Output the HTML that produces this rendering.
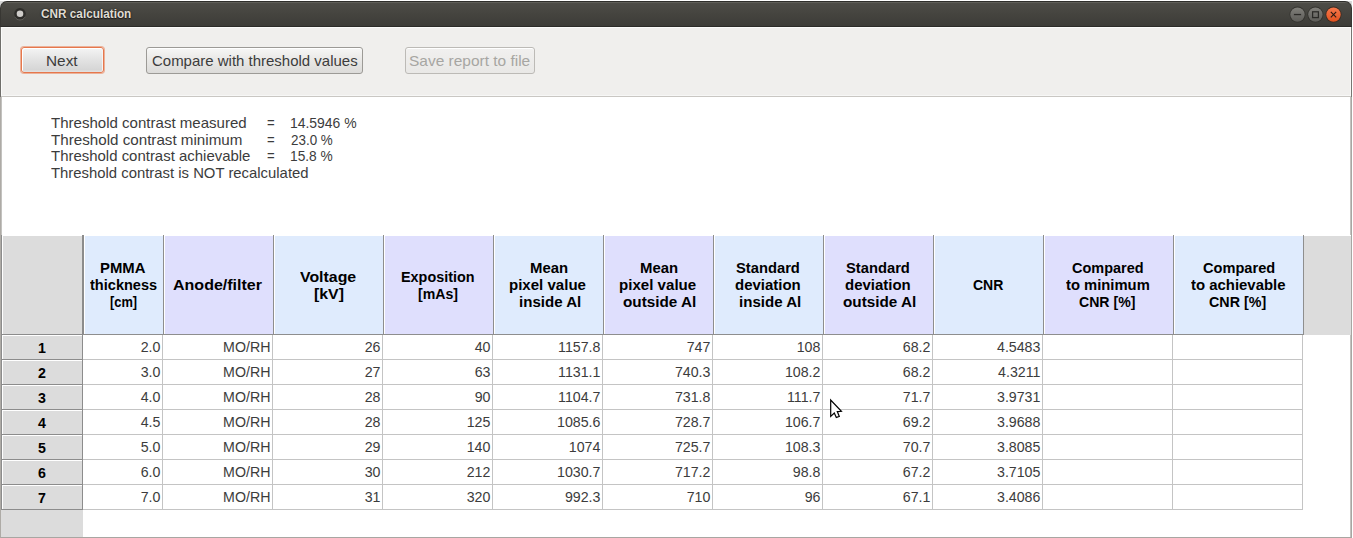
<!DOCTYPE html><html><head><meta charset="utf-8"><style>
html,body{margin:0;padding:0;}
body{width:1353px;height:538px;overflow:hidden;position:relative;background:#fff;font-family:"Liberation Sans",sans-serif;}
div{box-sizing:border-box;}
#cornerL{position:absolute;left:0;top:1px;width:9px;height:9px;background:#d8d8d8;}
#cornerR{position:absolute;left:1343px;top:1px;width:9px;height:9px;background:#d8d8d8;}
#tb{position:absolute;left:0;top:1px;width:1352px;height:26px;border-radius:7px 7px 0 0;border-left:1px solid #383733;border-right:1px solid #383733;
 background:linear-gradient(#605f59 0px,#605f59 1px,#4d4c47 1px,#45443f 12px,#3d3c38 24px);
 border-top:1px solid #2f2e2b;border-bottom:1px solid #2c2b28;z-index:1}
#tool{position:absolute;left:0;top:27px;width:1352px;height:70px;background:#f0efed;
 border-left:1px solid #6f6e6a;border-right:1px solid #777672;box-shadow:inset -1px 0 0 #f7f7f6;}
#tool::before{content:"";position:absolute;left:0;top:0;right:0;height:1px;background:#fbfbfa;}
#tool::after{content:"";position:absolute;left:0;top:0;bottom:0;width:1px;background:#fbfbfa;}
#sep{position:absolute;left:1px;top:95px;width:1350px;height:2px;border-top:1px solid #f7f7f6;background:#c9c7c3;}
#txt{position:absolute;left:0;top:97px;width:1352px;height:441px;background:#fff;border-left:1px solid #aeaba6;border-right:1px solid #a8a6a2;border-bottom:1px solid #a8a6a2;}
#txt::before{content:"";position:absolute;left:0;top:0;bottom:0;width:1px;background:#c3c2bf;}
#txt::after{content:"";position:absolute;right:0;top:0;bottom:0;width:1px;background:#c3c2bf;}
.btn{position:absolute;top:47px;height:27px;border:1px solid #9c9a96;border-radius:3px;
 background:linear-gradient(#f7f7f6,#ebeae8 40%,#dcdbd9);box-shadow:inset 0 1px 0 #fff;}
#btnNext{left:21px;top:47px;width:83px;height:26px;border:1px solid #e6774c;border-radius:3px;box-shadow:0 0 0 1px rgba(232,125,84,0.55), inset 1px 1px 0 #fff, inset -1px 0 0 #f4f4f4;
 background:linear-gradient(#f4f4f4,#e4e4e4 45%,#d6d6d6 90%,#e2e2e2);}
#btnCmp{left:146px;width:217px;}
#btnSave{left:405px;width:130px;border-color:#bcbab6;background:linear-gradient(#f1f0ef,#e9e8e6);}
#tframeL{position:absolute;left:1px;top:235px;width:1px;height:275px;background:#8c8c8c;}
#corner{position:absolute;left:2px;top:235px;width:82px;height:100px;background:#dcdcdc;border-right:2px solid #8c8c8c;border-bottom:1px solid #8c8c8c;box-shadow:inset 1px 1px 0 #fff;}
.hs{position:absolute;top:235px;height:100px;border-right:1px solid #8e8e8e;border-bottom:1px solid #8e8e8e;box-shadow:inset 1px 1px 0 #fff;}
.hb{background:#dfebfd;}
.hp{background:#dfdffd;}
#hfill{position:absolute;left:1304px;top:235px;width:47px;height:100px;background:#dcdcdc;box-shadow:inset 0 1px 0 #fff;}
.rh{position:absolute;left:2px;width:81px;height:25px;background:#dcdcdc;border-right:1px solid #8c8c8c;border-bottom:1px solid #8c8c8c;box-shadow:inset 1px 1px 0 #fff;}
#rhfill{position:absolute;left:1px;top:510px;width:82px;height:27px;background:#dcdcdc;}
.vl{position:absolute;top:335px;width:1px;height:175px;background:#c4c4c4;}
.hl{position:absolute;left:83px;width:1220px;height:1px;background:#c4c4c4;}
svg{z-index:2}
#title{text-shadow:0 0 2px #1e1d1b, 0 1px 1px #1e1d1b;z-index:2}
.t{z-index:3}
</style></head><body>
<div id="tb"></div>
<div id="cornerL"></div><div id="cornerR"></div>
<svg id="ctl" width="70" height="26" viewBox="0 0 70 26" style="position:absolute;left:1283px;top:1px">
<defs>
<linearGradient id="gg" x1="0" y1="0" x2="0" y2="1"><stop offset="0" stop-color="#807f7a"/><stop offset="1" stop-color="#5d5c58"/></linearGradient>
<linearGradient id="og" x1="0" y1="0" x2="0" y2="1"><stop offset="0" stop-color="#f6784c"/><stop offset="1" stop-color="#e2521f"/></linearGradient>
</defs>
<circle cx="14.5" cy="13.6" r="8" fill="#33322e"/>
<circle cx="14.5" cy="13.6" r="7.2" fill="url(#gg)"/>
<rect x="10.9" y="12.9" width="7.2" height="1.3" fill="#2b2a27"/>
<circle cx="32.4" cy="13.6" r="8" fill="#33322e"/>
<circle cx="32.4" cy="13.6" r="7.2" fill="url(#gg)"/>
<rect x="29.6" y="10.8" width="5.8" height="5.8" fill="none" stroke="#2b2a27" stroke-width="1.25"/>
<circle cx="50.5" cy="13.6" r="8" fill="#3a2a22"/>
<circle cx="50.5" cy="13.6" r="7.2" fill="url(#og)"/>
<path d="M47.8 10.9 L53.2 16.3 M53.2 10.9 L47.8 16.3" stroke="#2a1a14" stroke-width="1.1"/>
</svg>
<svg width="16" height="18" style="position:absolute;left:12px;top:5px" viewBox="0 0 16 18">
<path d="M2.9 11.9 A5.9 5.9 0 0 0 13.1 11.9" fill="none" stroke="#75746f" stroke-width="1"/>
<circle cx="8" cy="8.8" r="5.8" fill="#2e2d2a"/>
<circle cx="8" cy="8.8" r="3.3" fill="#cfcdca"/>
</svg>
<div id="tool"></div>
<div id="btnNext" class="btn"></div><div id="btnCmp" class="btn"></div><div id="btnSave" class="btn dis"></div>
<div id="sep"></div>
<div id="txt"></div>
<div id="corner"></div><div id="tframeL"></div>
<div class="hs hb" style="left:84px;width:80px"></div>
<div class="hs hp" style="left:164px;width:110px"></div>
<div class="hs hb" style="left:274px;width:110px"></div>
<div class="hs hp" style="left:384px;width:110px"></div>
<div class="hs hb" style="left:494px;width:110px"></div>
<div class="hs hp" style="left:604px;width:110px"></div>
<div class="hs hb" style="left:714px;width:110px"></div>
<div class="hs hp" style="left:824px;width:110px"></div>
<div class="hs hb" style="left:934px;width:110px"></div>
<div class="hs hp" style="left:1044px;width:130px"></div>
<div class="hs hb" style="left:1174px;width:130px"></div>
<div id="hfill"></div>
<div class="rh" style="top:335px"></div>
<div class="rh" style="top:360px"></div>
<div class="rh" style="top:385px"></div>
<div class="rh" style="top:410px"></div>
<div class="rh" style="top:435px"></div>
<div class="rh" style="top:460px"></div>
<div class="rh" style="top:485px"></div>
<div id="rhfill"></div>
<div id="body"></div>
<div class="vl" style="left:162px"></div>
<div class="vl" style="left:272px"></div>
<div class="vl" style="left:382px"></div>
<div class="vl" style="left:492px"></div>
<div class="vl" style="left:602px"></div>
<div class="vl" style="left:712px"></div>
<div class="vl" style="left:822px"></div>
<div class="vl" style="left:932px"></div>
<div class="vl" style="left:1042px"></div>
<div class="vl" style="left:1172px"></div>
<div class="vl" style="left:1302px"></div>
<div class="hl" style="top:359px"></div>
<div class="hl" style="top:384px"></div>
<div class="hl" style="top:409px"></div>
<div class="hl" style="top:434px"></div>
<div class="hl" style="top:459px"></div>
<div class="hl" style="top:484px"></div>
<div class="hl" style="top:509px"></div>
<svg width="16" height="22" viewBox="0 0 16 22" style="position:absolute;left:829px;top:398px">
<path d="M1.7 2 L1.7 18.4 L5.3 15.1 L7.3 19.6 L10.3 18.4 L8.3 13.6 L12.4 13.3 Z" fill="#fff" stroke="#000" stroke-width="1.2" stroke-linejoin="miter"/>
</svg>
<div id="title" class="t" style="position:absolute;white-space:pre;font-size:12.80px;line-height:14.707px;font-weight:700;color:#dfdbd2;top:6.82px;left:40.58px;transform-origin:0 0;transform:scaleX(0.9204);">CNR calculation</div>
<div id="b_next" class="t" style="position:absolute;white-space:pre;font-size:14.20px;line-height:16.316px;font-weight:400;color:#3c3c3c;top:53.15px;left:46.39px;transform-origin:0 0;transform:scaleX(1.0834);">Next</div>
<div id="b_cmp" class="t" style="position:absolute;white-space:pre;font-size:14.20px;line-height:16.316px;font-weight:400;color:#3c3c3c;top:53.15px;left:151.78px;transform-origin:0 0;transform:scaleX(1.0557);">Compare with threshold values</div>
<div id="b_save" class="t" style="position:absolute;white-space:pre;font-size:14.20px;line-height:16.316px;font-weight:400;color:#a7a6a2;top:53.15px;left:408.99px;transform-origin:0 0;transform:scaleX(1.0902);">Save report to file</div>
<div id="info0" class="t" style="position:absolute;white-space:pre;font-size:14.20px;line-height:16.316px;font-weight:400;color:#3c3c3c;top:114.75px;left:50.83px;transform-origin:0 0;transform:scaleX(1.0606);">Threshold contrast measured</div>
<div id="info1" class="t" style="position:absolute;white-space:pre;font-size:14.20px;line-height:16.316px;font-weight:400;color:#3c3c3c;top:131.55px;left:50.84px;transform-origin:0 0;transform:scaleX(1.0693);">Threshold contrast minimum</div>
<div id="info2" class="t" style="position:absolute;white-space:pre;font-size:14.20px;line-height:16.316px;font-weight:400;color:#3c3c3c;top:148.45px;left:50.83px;transform-origin:0 0;transform:scaleX(1.0537);">Threshold contrast achievable</div>
<div id="info3" class="t" style="position:absolute;white-space:pre;font-size:14.20px;line-height:16.316px;font-weight:400;color:#3c3c3c;top:165.35px;left:50.83px;transform-origin:0 0;transform:scaleX(1.0480);">Threshold contrast is NOT recalculated</div>
<div id="eq0" class="t" style="position:absolute;white-space:pre;font-size:14.20px;line-height:16.316px;font-weight:400;color:#3c3c3c;top:114.75px;left:266.58px;transform-origin:0 0;transform:scaleX(0.9264);">=</div>
<div id="val0" class="t" style="position:absolute;white-space:pre;font-size:14.20px;line-height:16.316px;font-weight:400;color:#3c3c3c;top:114.75px;left:290.02px;transform-origin:0 0;transform:scaleX(0.9821);">14.5946 %</div>
<div id="eq1" class="t" style="position:absolute;white-space:pre;font-size:14.20px;line-height:16.316px;font-weight:400;color:#3c3c3c;top:131.55px;left:266.58px;transform-origin:0 0;transform:scaleX(0.9264);">=</div>
<div id="val1" class="t" style="position:absolute;white-space:pre;font-size:14.20px;line-height:16.316px;font-weight:400;color:#3c3c3c;top:131.55px;left:291.00px;transform-origin:0 0;transform:scaleX(0.9455);">23.0 %</div>
<div id="eq2" class="t" style="position:absolute;white-space:pre;font-size:14.20px;line-height:16.316px;font-weight:400;color:#3c3c3c;top:148.45px;left:266.58px;transform-origin:0 0;transform:scaleX(0.9264);">=</div>
<div id="val2" class="t" style="position:absolute;white-space:pre;font-size:14.20px;line-height:16.316px;font-weight:400;color:#3c3c3c;top:148.45px;left:290.03px;transform-origin:0 0;transform:scaleX(0.9675);">15.8 %</div>
<div id="h0_0" class="t" style="position:absolute;white-space:pre;font-size:14.20px;line-height:16.316px;font-weight:700;color:#000000;top:260.05px;left:100.17px;transform-origin:0 0;transform:scaleX(1.0465);">PMMA</div>
<div id="h0_1" class="t" style="position:absolute;white-space:pre;font-size:14.20px;line-height:16.316px;font-weight:700;color:#000000;top:276.75px;left:89.94px;transform-origin:0 0;transform:scaleX(1.0262);">thickness</div>
<div id="h0_2" class="t" style="position:absolute;white-space:pre;font-size:14.20px;line-height:16.316px;font-weight:700;color:#000000;top:294.05px;left:109.87px;transform-origin:0 0;transform:scaleX(0.9066);">[cm]</div>
<div id="h1_0" class="t" style="position:absolute;white-space:pre;font-size:14.20px;line-height:16.316px;font-weight:700;color:#000000;top:276.75px;left:173.44px;transform-origin:0 0;transform:scaleX(1.1291);">Anode/filter</div>
<div id="h2_0" class="t" style="position:absolute;white-space:pre;font-size:14.20px;line-height:16.316px;font-weight:700;color:#000000;top:268.85px;left:299.94px;transform-origin:0 0;transform:scaleX(1.1200);">Voltage</div>
<div id="h2_1" class="t" style="position:absolute;white-space:pre;font-size:14.20px;line-height:16.316px;font-weight:700;color:#000000;top:285.95px;left:313.85px;transform-origin:0 0;transform:scaleX(1.1158);">[kV]</div>
<div id="h3_0" class="t" style="position:absolute;white-space:pre;font-size:14.20px;line-height:16.316px;font-weight:700;color:#000000;top:268.85px;left:401.49px;transform-origin:0 0;transform:scaleX(1.0139);">Exposition</div>
<div id="h3_1" class="t" style="position:absolute;white-space:pre;font-size:14.20px;line-height:16.316px;font-weight:700;color:#000000;top:285.95px;left:418.49px;transform-origin:0 0;transform:scaleX(0.9957);">[mAs]</div>
<div id="h4_0" class="t" style="position:absolute;white-space:pre;font-size:14.20px;line-height:16.316px;font-weight:700;color:#000000;top:260.05px;left:529.78px;transform-origin:0 0;transform:scaleX(1.0500);">Mean</div>
<div id="h4_1" class="t" style="position:absolute;white-space:pre;font-size:14.20px;line-height:16.316px;font-weight:700;color:#000000;top:276.75px;left:508.91px;transform-origin:0 0;transform:scaleX(1.0604);">pixel value</div>
<div id="h4_2" class="t" style="position:absolute;white-space:pre;font-size:14.20px;line-height:16.316px;font-weight:700;color:#000000;top:294.05px;left:519.00px;transform-origin:0 0;transform:scaleX(1.0612);">inside Al</div>
<div id="h5_0" class="t" style="position:absolute;white-space:pre;font-size:14.20px;line-height:16.316px;font-weight:700;color:#000000;top:260.05px;left:639.78px;transform-origin:0 0;transform:scaleX(1.0500);">Mean</div>
<div id="h5_1" class="t" style="position:absolute;white-space:pre;font-size:14.20px;line-height:16.316px;font-weight:700;color:#000000;top:276.75px;left:619.47px;transform-origin:0 0;transform:scaleX(1.0639);">pixel value</div>
<div id="h5_2" class="t" style="position:absolute;white-space:pre;font-size:14.20px;line-height:16.316px;font-weight:700;color:#000000;top:294.05px;left:623.00px;transform-origin:0 0;transform:scaleX(1.0765);">outside Al</div>
<div id="h6_0" class="t" style="position:absolute;white-space:pre;font-size:14.20px;line-height:16.316px;font-weight:700;color:#000000;top:260.05px;left:735.91px;transform-origin:0 0;transform:scaleX(1.0387);">Standard</div>
<div id="h6_1" class="t" style="position:absolute;white-space:pre;font-size:14.20px;line-height:16.316px;font-weight:700;color:#000000;top:276.75px;left:735.16px;transform-origin:0 0;transform:scaleX(1.0549);">deviation</div>
<div id="h6_2" class="t" style="position:absolute;white-space:pre;font-size:14.20px;line-height:16.316px;font-weight:700;color:#000000;top:294.05px;left:739.00px;transform-origin:0 0;transform:scaleX(1.0612);">inside Al</div>
<div id="h7_0" class="t" style="position:absolute;white-space:pre;font-size:14.20px;line-height:16.316px;font-weight:700;color:#000000;top:260.05px;left:845.91px;transform-origin:0 0;transform:scaleX(1.0387);">Standard</div>
<div id="h7_1" class="t" style="position:absolute;white-space:pre;font-size:14.20px;line-height:16.316px;font-weight:700;color:#000000;top:276.75px;left:845.16px;transform-origin:0 0;transform:scaleX(1.0549);">deviation</div>
<div id="h7_2" class="t" style="position:absolute;white-space:pre;font-size:14.20px;line-height:16.316px;font-weight:700;color:#000000;top:294.05px;left:843.00px;transform-origin:0 0;transform:scaleX(1.0765);">outside Al</div>
<div id="h8_0" class="t" style="position:absolute;white-space:pre;font-size:14.20px;line-height:16.316px;font-weight:700;color:#000000;top:276.75px;left:972.89px;transform-origin:0 0;transform:scaleX(0.9872);">CNR</div>
<div id="h9_0" class="t" style="position:absolute;white-space:pre;font-size:14.20px;line-height:16.316px;font-weight:700;color:#000000;top:260.05px;left:1072.49px;transform-origin:0 0;transform:scaleX(1.0200);">Compared</div>
<div id="h9_1" class="t" style="position:absolute;white-space:pre;font-size:14.20px;line-height:16.316px;font-weight:700;color:#000000;top:276.75px;left:1066.21px;transform-origin:0 0;transform:scaleX(1.0420);">to minimum</div>
<div id="h9_2" class="t" style="position:absolute;white-space:pre;font-size:14.20px;line-height:16.316px;font-weight:700;color:#000000;top:294.05px;left:1079.49px;transform-origin:0 0;transform:scaleX(0.9933);">CNR [%]</div>
<div id="h10_0" class="t" style="position:absolute;white-space:pre;font-size:14.20px;line-height:16.316px;font-weight:700;color:#000000;top:260.05px;left:1202.61px;transform-origin:0 0;transform:scaleX(1.0286);">Compared</div>
<div id="h10_1" class="t" style="position:absolute;white-space:pre;font-size:14.20px;line-height:16.316px;font-weight:700;color:#000000;top:276.75px;left:1190.61px;transform-origin:0 0;transform:scaleX(1.0511);">to achievable</div>
<div id="h10_2" class="t" style="position:absolute;white-space:pre;font-size:14.20px;line-height:16.316px;font-weight:700;color:#000000;top:294.05px;left:1209.49px;transform-origin:0 0;transform:scaleX(1.0073);">CNR [%]</div>
<div id="rn0" class="t" style="position:absolute;white-space:pre;font-size:14.20px;line-height:16.316px;font-weight:700;color:#000000;top:339.65px;left:2px;width:80px;text-align:center;">1</div>
<div id="d0_0" class="t" style="position:absolute;white-space:pre;font-size:14.20px;line-height:16.316px;font-weight:400;color:#3c3c3c;top:338.65px;right:1192.60px;transform-origin:100% 0;transform:scaleX(1.0000);">2.0</div>
<div id="d0_1" class="t" style="position:absolute;white-space:pre;font-size:14.20px;line-height:16.316px;font-weight:400;color:#3c3c3c;top:338.65px;right:1082.60px;transform-origin:100% 0;transform:scaleX(1.0000);">MO/RH</div>
<div id="d0_2" class="t" style="position:absolute;white-space:pre;font-size:14.20px;line-height:16.316px;font-weight:400;color:#3c3c3c;top:338.65px;right:972.60px;transform-origin:100% 0;transform:scaleX(1.0000);">26</div>
<div id="d0_3" class="t" style="position:absolute;white-space:pre;font-size:14.20px;line-height:16.316px;font-weight:400;color:#3c3c3c;top:338.65px;right:862.60px;transform-origin:100% 0;transform:scaleX(1.0000);">40</div>
<div id="d0_4" class="t" style="position:absolute;white-space:pre;font-size:14.20px;line-height:16.316px;font-weight:400;color:#3c3c3c;top:338.65px;right:752.60px;transform-origin:100% 0;transform:scaleX(1.0000);">1157.8</div>
<div id="d0_5" class="t" style="position:absolute;white-space:pre;font-size:14.20px;line-height:16.316px;font-weight:400;color:#3c3c3c;top:338.65px;right:642.60px;transform-origin:100% 0;transform:scaleX(1.0000);">747</div>
<div id="d0_6" class="t" style="position:absolute;white-space:pre;font-size:14.20px;line-height:16.316px;font-weight:400;color:#3c3c3c;top:338.65px;right:532.60px;transform-origin:100% 0;transform:scaleX(1.0000);">108</div>
<div id="d0_7" class="t" style="position:absolute;white-space:pre;font-size:14.20px;line-height:16.316px;font-weight:400;color:#3c3c3c;top:338.65px;right:422.60px;transform-origin:100% 0;transform:scaleX(1.0000);">68.2</div>
<div id="d0_8" class="t" style="position:absolute;white-space:pre;font-size:14.20px;line-height:16.316px;font-weight:400;color:#3c3c3c;top:338.65px;right:312.60px;transform-origin:100% 0;transform:scaleX(1.0000);">4.5483</div>
<div id="rn1" class="t" style="position:absolute;white-space:pre;font-size:14.20px;line-height:16.316px;font-weight:700;color:#000000;top:364.65px;left:2px;width:80px;text-align:center;">2</div>
<div id="d1_0" class="t" style="position:absolute;white-space:pre;font-size:14.20px;line-height:16.316px;font-weight:400;color:#3c3c3c;top:363.65px;right:1192.60px;transform-origin:100% 0;transform:scaleX(1.0000);">3.0</div>
<div id="d1_1" class="t" style="position:absolute;white-space:pre;font-size:14.20px;line-height:16.316px;font-weight:400;color:#3c3c3c;top:363.65px;right:1082.60px;transform-origin:100% 0;transform:scaleX(1.0000);">MO/RH</div>
<div id="d1_2" class="t" style="position:absolute;white-space:pre;font-size:14.20px;line-height:16.316px;font-weight:400;color:#3c3c3c;top:363.65px;right:972.60px;transform-origin:100% 0;transform:scaleX(1.0000);">27</div>
<div id="d1_3" class="t" style="position:absolute;white-space:pre;font-size:14.20px;line-height:16.316px;font-weight:400;color:#3c3c3c;top:363.65px;right:862.60px;transform-origin:100% 0;transform:scaleX(1.0000);">63</div>
<div id="d1_4" class="t" style="position:absolute;white-space:pre;font-size:14.20px;line-height:16.316px;font-weight:400;color:#3c3c3c;top:363.65px;right:752.60px;transform-origin:100% 0;transform:scaleX(1.0000);">1131.1</div>
<div id="d1_5" class="t" style="position:absolute;white-space:pre;font-size:14.20px;line-height:16.316px;font-weight:400;color:#3c3c3c;top:363.65px;right:642.60px;transform-origin:100% 0;transform:scaleX(1.0000);">740.3</div>
<div id="d1_6" class="t" style="position:absolute;white-space:pre;font-size:14.20px;line-height:16.316px;font-weight:400;color:#3c3c3c;top:363.65px;right:532.60px;transform-origin:100% 0;transform:scaleX(1.0000);">108.2</div>
<div id="d1_7" class="t" style="position:absolute;white-space:pre;font-size:14.20px;line-height:16.316px;font-weight:400;color:#3c3c3c;top:363.65px;right:422.60px;transform-origin:100% 0;transform:scaleX(1.0000);">68.2</div>
<div id="d1_8" class="t" style="position:absolute;white-space:pre;font-size:14.20px;line-height:16.316px;font-weight:400;color:#3c3c3c;top:363.65px;right:312.60px;transform-origin:100% 0;transform:scaleX(1.0000);">4.3211</div>
<div id="rn2" class="t" style="position:absolute;white-space:pre;font-size:14.20px;line-height:16.316px;font-weight:700;color:#000000;top:389.65px;left:2px;width:80px;text-align:center;">3</div>
<div id="d2_0" class="t" style="position:absolute;white-space:pre;font-size:14.20px;line-height:16.316px;font-weight:400;color:#3c3c3c;top:388.65px;right:1192.60px;transform-origin:100% 0;transform:scaleX(1.0000);">4.0</div>
<div id="d2_1" class="t" style="position:absolute;white-space:pre;font-size:14.20px;line-height:16.316px;font-weight:400;color:#3c3c3c;top:388.65px;right:1082.60px;transform-origin:100% 0;transform:scaleX(1.0000);">MO/RH</div>
<div id="d2_2" class="t" style="position:absolute;white-space:pre;font-size:14.20px;line-height:16.316px;font-weight:400;color:#3c3c3c;top:388.65px;right:972.60px;transform-origin:100% 0;transform:scaleX(1.0000);">28</div>
<div id="d2_3" class="t" style="position:absolute;white-space:pre;font-size:14.20px;line-height:16.316px;font-weight:400;color:#3c3c3c;top:388.65px;right:862.60px;transform-origin:100% 0;transform:scaleX(1.0000);">90</div>
<div id="d2_4" class="t" style="position:absolute;white-space:pre;font-size:14.20px;line-height:16.316px;font-weight:400;color:#3c3c3c;top:388.65px;right:752.60px;transform-origin:100% 0;transform:scaleX(1.0000);">1104.7</div>
<div id="d2_5" class="t" style="position:absolute;white-space:pre;font-size:14.20px;line-height:16.316px;font-weight:400;color:#3c3c3c;top:388.65px;right:642.60px;transform-origin:100% 0;transform:scaleX(1.0000);">731.8</div>
<div id="d2_6" class="t" style="position:absolute;white-space:pre;font-size:14.20px;line-height:16.316px;font-weight:400;color:#3c3c3c;top:388.65px;right:532.60px;transform-origin:100% 0;transform:scaleX(1.0000);">111.7</div>
<div id="d2_7" class="t" style="position:absolute;white-space:pre;font-size:14.20px;line-height:16.316px;font-weight:400;color:#3c3c3c;top:388.65px;right:422.60px;transform-origin:100% 0;transform:scaleX(1.0000);">71.7</div>
<div id="d2_8" class="t" style="position:absolute;white-space:pre;font-size:14.20px;line-height:16.316px;font-weight:400;color:#3c3c3c;top:388.65px;right:312.60px;transform-origin:100% 0;transform:scaleX(1.0000);">3.9731</div>
<div id="rn3" class="t" style="position:absolute;white-space:pre;font-size:14.20px;line-height:16.316px;font-weight:700;color:#000000;top:414.65px;left:2px;width:80px;text-align:center;">4</div>
<div id="d3_0" class="t" style="position:absolute;white-space:pre;font-size:14.20px;line-height:16.316px;font-weight:400;color:#3c3c3c;top:413.65px;right:1192.60px;transform-origin:100% 0;transform:scaleX(1.0000);">4.5</div>
<div id="d3_1" class="t" style="position:absolute;white-space:pre;font-size:14.20px;line-height:16.316px;font-weight:400;color:#3c3c3c;top:413.65px;right:1082.60px;transform-origin:100% 0;transform:scaleX(1.0000);">MO/RH</div>
<div id="d3_2" class="t" style="position:absolute;white-space:pre;font-size:14.20px;line-height:16.316px;font-weight:400;color:#3c3c3c;top:413.65px;right:972.60px;transform-origin:100% 0;transform:scaleX(1.0000);">28</div>
<div id="d3_3" class="t" style="position:absolute;white-space:pre;font-size:14.20px;line-height:16.316px;font-weight:400;color:#3c3c3c;top:413.65px;right:862.60px;transform-origin:100% 0;transform:scaleX(1.0000);">125</div>
<div id="d3_4" class="t" style="position:absolute;white-space:pre;font-size:14.20px;line-height:16.316px;font-weight:400;color:#3c3c3c;top:413.65px;right:752.60px;transform-origin:100% 0;transform:scaleX(1.0000);">1085.6</div>
<div id="d3_5" class="t" style="position:absolute;white-space:pre;font-size:14.20px;line-height:16.316px;font-weight:400;color:#3c3c3c;top:413.65px;right:642.60px;transform-origin:100% 0;transform:scaleX(1.0000);">728.7</div>
<div id="d3_6" class="t" style="position:absolute;white-space:pre;font-size:14.20px;line-height:16.316px;font-weight:400;color:#3c3c3c;top:413.65px;right:532.60px;transform-origin:100% 0;transform:scaleX(1.0000);">106.7</div>
<div id="d3_7" class="t" style="position:absolute;white-space:pre;font-size:14.20px;line-height:16.316px;font-weight:400;color:#3c3c3c;top:413.65px;right:422.60px;transform-origin:100% 0;transform:scaleX(1.0000);">69.2</div>
<div id="d3_8" class="t" style="position:absolute;white-space:pre;font-size:14.20px;line-height:16.316px;font-weight:400;color:#3c3c3c;top:413.65px;right:312.60px;transform-origin:100% 0;transform:scaleX(1.0000);">3.9688</div>
<div id="rn4" class="t" style="position:absolute;white-space:pre;font-size:14.20px;line-height:16.316px;font-weight:700;color:#000000;top:439.65px;left:2px;width:80px;text-align:center;">5</div>
<div id="d4_0" class="t" style="position:absolute;white-space:pre;font-size:14.20px;line-height:16.316px;font-weight:400;color:#3c3c3c;top:438.65px;right:1192.60px;transform-origin:100% 0;transform:scaleX(1.0000);">5.0</div>
<div id="d4_1" class="t" style="position:absolute;white-space:pre;font-size:14.20px;line-height:16.316px;font-weight:400;color:#3c3c3c;top:438.65px;right:1082.60px;transform-origin:100% 0;transform:scaleX(1.0000);">MO/RH</div>
<div id="d4_2" class="t" style="position:absolute;white-space:pre;font-size:14.20px;line-height:16.316px;font-weight:400;color:#3c3c3c;top:438.65px;right:972.60px;transform-origin:100% 0;transform:scaleX(1.0000);">29</div>
<div id="d4_3" class="t" style="position:absolute;white-space:pre;font-size:14.20px;line-height:16.316px;font-weight:400;color:#3c3c3c;top:438.65px;right:862.60px;transform-origin:100% 0;transform:scaleX(1.0000);">140</div>
<div id="d4_4" class="t" style="position:absolute;white-space:pre;font-size:14.20px;line-height:16.316px;font-weight:400;color:#3c3c3c;top:438.65px;right:752.60px;transform-origin:100% 0;transform:scaleX(1.0000);">1074</div>
<div id="d4_5" class="t" style="position:absolute;white-space:pre;font-size:14.20px;line-height:16.316px;font-weight:400;color:#3c3c3c;top:438.65px;right:642.60px;transform-origin:100% 0;transform:scaleX(1.0000);">725.7</div>
<div id="d4_6" class="t" style="position:absolute;white-space:pre;font-size:14.20px;line-height:16.316px;font-weight:400;color:#3c3c3c;top:438.65px;right:532.60px;transform-origin:100% 0;transform:scaleX(1.0000);">108.3</div>
<div id="d4_7" class="t" style="position:absolute;white-space:pre;font-size:14.20px;line-height:16.316px;font-weight:400;color:#3c3c3c;top:438.65px;right:422.60px;transform-origin:100% 0;transform:scaleX(1.0000);">70.7</div>
<div id="d4_8" class="t" style="position:absolute;white-space:pre;font-size:14.20px;line-height:16.316px;font-weight:400;color:#3c3c3c;top:438.65px;right:312.60px;transform-origin:100% 0;transform:scaleX(1.0000);">3.8085</div>
<div id="rn5" class="t" style="position:absolute;white-space:pre;font-size:14.20px;line-height:16.316px;font-weight:700;color:#000000;top:464.65px;left:2px;width:80px;text-align:center;">6</div>
<div id="d5_0" class="t" style="position:absolute;white-space:pre;font-size:14.20px;line-height:16.316px;font-weight:400;color:#3c3c3c;top:463.65px;right:1192.60px;transform-origin:100% 0;transform:scaleX(1.0000);">6.0</div>
<div id="d5_1" class="t" style="position:absolute;white-space:pre;font-size:14.20px;line-height:16.316px;font-weight:400;color:#3c3c3c;top:463.65px;right:1082.60px;transform-origin:100% 0;transform:scaleX(1.0000);">MO/RH</div>
<div id="d5_2" class="t" style="position:absolute;white-space:pre;font-size:14.20px;line-height:16.316px;font-weight:400;color:#3c3c3c;top:463.65px;right:972.60px;transform-origin:100% 0;transform:scaleX(1.0000);">30</div>
<div id="d5_3" class="t" style="position:absolute;white-space:pre;font-size:14.20px;line-height:16.316px;font-weight:400;color:#3c3c3c;top:463.65px;right:862.60px;transform-origin:100% 0;transform:scaleX(1.0000);">212</div>
<div id="d5_4" class="t" style="position:absolute;white-space:pre;font-size:14.20px;line-height:16.316px;font-weight:400;color:#3c3c3c;top:463.65px;right:752.60px;transform-origin:100% 0;transform:scaleX(1.0000);">1030.7</div>
<div id="d5_5" class="t" style="position:absolute;white-space:pre;font-size:14.20px;line-height:16.316px;font-weight:400;color:#3c3c3c;top:463.65px;right:642.60px;transform-origin:100% 0;transform:scaleX(1.0000);">717.2</div>
<div id="d5_6" class="t" style="position:absolute;white-space:pre;font-size:14.20px;line-height:16.316px;font-weight:400;color:#3c3c3c;top:463.65px;right:532.60px;transform-origin:100% 0;transform:scaleX(1.0000);">98.8</div>
<div id="d5_7" class="t" style="position:absolute;white-space:pre;font-size:14.20px;line-height:16.316px;font-weight:400;color:#3c3c3c;top:463.65px;right:422.60px;transform-origin:100% 0;transform:scaleX(1.0000);">67.2</div>
<div id="d5_8" class="t" style="position:absolute;white-space:pre;font-size:14.20px;line-height:16.316px;font-weight:400;color:#3c3c3c;top:463.65px;right:312.60px;transform-origin:100% 0;transform:scaleX(1.0000);">3.7105</div>
<div id="rn6" class="t" style="position:absolute;white-space:pre;font-size:14.20px;line-height:16.316px;font-weight:700;color:#000000;top:489.65px;left:2px;width:80px;text-align:center;">7</div>
<div id="d6_0" class="t" style="position:absolute;white-space:pre;font-size:14.20px;line-height:16.316px;font-weight:400;color:#3c3c3c;top:488.65px;right:1192.60px;transform-origin:100% 0;transform:scaleX(1.0000);">7.0</div>
<div id="d6_1" class="t" style="position:absolute;white-space:pre;font-size:14.20px;line-height:16.316px;font-weight:400;color:#3c3c3c;top:488.65px;right:1082.60px;transform-origin:100% 0;transform:scaleX(1.0000);">MO/RH</div>
<div id="d6_2" class="t" style="position:absolute;white-space:pre;font-size:14.20px;line-height:16.316px;font-weight:400;color:#3c3c3c;top:488.65px;right:972.60px;transform-origin:100% 0;transform:scaleX(1.0000);">31</div>
<div id="d6_3" class="t" style="position:absolute;white-space:pre;font-size:14.20px;line-height:16.316px;font-weight:400;color:#3c3c3c;top:488.65px;right:862.60px;transform-origin:100% 0;transform:scaleX(1.0000);">320</div>
<div id="d6_4" class="t" style="position:absolute;white-space:pre;font-size:14.20px;line-height:16.316px;font-weight:400;color:#3c3c3c;top:488.65px;right:752.60px;transform-origin:100% 0;transform:scaleX(1.0000);">992.3</div>
<div id="d6_5" class="t" style="position:absolute;white-space:pre;font-size:14.20px;line-height:16.316px;font-weight:400;color:#3c3c3c;top:488.65px;right:642.60px;transform-origin:100% 0;transform:scaleX(1.0000);">710</div>
<div id="d6_6" class="t" style="position:absolute;white-space:pre;font-size:14.20px;line-height:16.316px;font-weight:400;color:#3c3c3c;top:488.65px;right:532.60px;transform-origin:100% 0;transform:scaleX(1.0000);">96</div>
<div id="d6_7" class="t" style="position:absolute;white-space:pre;font-size:14.20px;line-height:16.316px;font-weight:400;color:#3c3c3c;top:488.65px;right:422.60px;transform-origin:100% 0;transform:scaleX(1.0000);">67.1</div>
<div id="d6_8" class="t" style="position:absolute;white-space:pre;font-size:14.20px;line-height:16.316px;font-weight:400;color:#3c3c3c;top:488.65px;right:312.60px;transform-origin:100% 0;transform:scaleX(1.0000);">3.4086</div>
</body></html>
